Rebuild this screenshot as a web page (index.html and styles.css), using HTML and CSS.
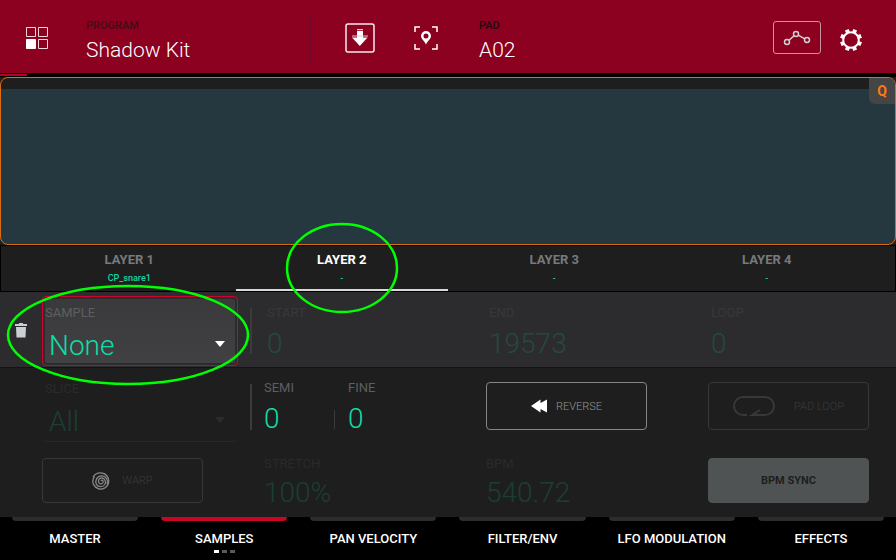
FILE: index.html
```html
<!DOCTYPE html>
<html lang="en">
<head>
<meta charset="utf-8">
<meta name="viewport" content="width=device-width, initial-scale=1">
<title>Program Edit – Samples</title>
<link rel="stylesheet" href="styles.css">
</head>
<body>
<header class="header">
  <button class="icon-button" aria-label="Pad grid">
    <svg width="22" height="22" viewBox="0 0 22 22" fill="none" stroke="#eadadd"><path d="M.5.5h9v9h-9zM12.500.5h9v9h-9zM12.500 12.500h9v9h-9z"/><path fill="#fff" stroke="#fff" d="M.5 12.500h9v9h-9z"/></svg>
  </button>
  <div class="readout program">
    <span class="readout-label">PROGRAM</span>
    <span class="readout-value">Shadow Kit</span>
  </div>
  <button class="icon-button save" aria-label="Save">
    <svg width="30" height="30" viewBox="0 0 30 30"><rect x="1" y="1" width="28" height="28" rx="2" fill="none" stroke="#f6eaed" stroke-width="1.500"/><path fill="#fff" d="M12 8h6v6.500h4.500L14.800 23 7 14.500h5z"/><path fill="#e9c8d0" d="M12 6h6v1.200h-6zM7 12.500h16v1H7z"/></svg>
  </button>
  <button class="icon-button" aria-label="Locate pad">
    <svg width="24" height="24" viewBox="0 0 24 24"><path fill="none" stroke="#fff" stroke-width="1.500" d="M1 6V1h5M18 1h5v5M23 18v5h-5M6 23H1v-5"/><path fill="#fff" fill-rule="evenodd" d="M12 5a5 5 0 0 0-5 5c0 3 3.500 5 5 8.500C13.500 15 17 13 17 10a5 5 0 0 0-5-5zm0 2.500a2.500 2.500 0 1 1 0 5 2.500 2.500 0 0 1 0-5z"/></svg>
  </button>
  <div class="readout pad">
    <span class="readout-label dark">PAD</span>
    <span class="readout-value">A02</span>
  </div>
  <button class="icon-button automation" aria-label="Automation">
    <svg width="28" height="16" viewBox="0 0 28 16" fill="none" stroke="#d5cfd3" stroke-width="1.500"><circle cx="4" cy="12" r="2.500"/><circle cx="13" cy="4" r="2.500"/><circle cx="24" cy="10" r="2.500"/><path d="M6 10.300l5.100-4.600M15.200 5.200l6.600 3.600"/></svg>
  </button>
  <button class="icon-button settings" aria-label="Settings">
    <svg width="22" height="22" viewBox="-11 -11 22 22">
      <circle r="7.800" fill="none" stroke="#fff" stroke-width="2"/>
      <g stroke="#fff" stroke-width="4">
        <path transform="rotate(22.500)" d="M0-11v3M0 11v-3M-11 0h3M11 0h-3"/>
        <path transform="rotate(67.500)" d="M0-11v3M0 11v-3M-11 0h3M11 0h-3"/>
      </g>
    </svg>
  </button>
</header>
<div class="progress"><span class="progress-fill"></span></div>

<main class="main">
  <section class="waveform" aria-label="Waveform">
    <button class="q-link" aria-label="Q-Link">Q</button>
  </section>

  <nav class="layers" aria-label="Layers">
    <button class="layer">LAYER 1<span class="layer-sample">CP_snare1</span></button>
    <button class="layer active">LAYER 2<span class="layer-sample">-</span>
      <svg class="ring" viewBox="0 0 114 92" aria-hidden="true"><ellipse cx="57" cy="46" rx="55" ry="44"/></svg>
    </button>
    <button class="layer">LAYER 3<span class="layer-sample">-</span></button>
    <button class="layer">LAYER 4<span class="layer-sample">-</span></button>
  </nav>

  <section class="row sample-row">
    <button class="trash" aria-label="Clear sample">
      <svg width="12" height="16" viewBox="0 0 12 16" fill="#c9cfd3"><path d="M4 1h4v1h4v2H0V2h4zM1 5h10l-.5 10.500h-9z"/></svg>
    </button>
    <div class="lead">
      <div class="picker focused">
        <div class="picker-face">
          <label class="label" for="sample">SAMPLE</label>
          <select class="value" id="sample"><option>None</option></select>
          <span class="caret"></span>
        </div>
        <svg class="ring" viewBox="0 0 244 102" aria-hidden="true"><ellipse cx="122" cy="51" rx="120" ry="49"/></svg>
      </div>
      <span class="divider"></span>
    </div>
    <div class="field off inset"><label class="label" for="start">START</label><input class="value" id="start" value="0" disabled></div>
    <div class="field off inset"><label class="label" for="end">END</label><input class="value" id="end" value="19573" disabled></div>
    <div class="field off inset"><label class="label" for="loop">LOOP</label><input class="value" id="loop" value="0" disabled></div>
  </section>

  <section class="row slice-row">
    <div class="lead">
      <div class="picker off">
        <div class="picker-face">
          <label class="label" for="slice">SLICE</label>
          <select class="value" id="slice" disabled><option>All</option></select>
          <span class="caret"></span>
        </div>
      </div>
      <span class="divider"></span>
    </div>
    <div class="pair">
      <div class="field"><label class="label" for="semi">SEMI</label><input class="value" id="semi" value="0"></div>
      <div class="field"><label class="label" for="fine">FINE</label><input class="value" id="fine" value="0"></div>
    </div>
    <button class="action reverse">
      <svg width="16" height="14" viewBox="0 0 16 14" fill="#fff"><path d="M0 7 9.500.5V4L16 .5v13L9.500 10v3.500z"/></svg>
      REVERSE
    </button>
    <button class="action loop-button" disabled>
      <svg width="42" height="20" viewBox="0 0 42 20" fill="none" stroke="#38383a" stroke-width="2"><path d="M14 19h-4a9 9 0 0 1 0-18h22a9 9 0 0 1 0 18H19l8-5"/></svg>
      PAD LOOP
    </button>
  </section>

  <section class="row warp-row">
    <button class="action warp" disabled>
      <svg width="18" height="18" viewBox="0 0 18 18" fill="none" stroke="#858787" stroke-width="1.300"><path d="M9 9c.5-1.400 2.400-.6 2.200 1-.3 2-3.200 2.600-4.300.8C5.500 8.500 7.300 5.800 9.800 6c3.200.3 4.600 3.900 3 6.500-2 3-6.500 2.900-8.300-.1C2.500 8.800 5 4 9.200 3.800c4.800-.1 7.500 4.400 6 8.400"/><path d="M1 5C4.500-.2 11.500-.3 15 4c3 4 2 9.800-2.500 12.200-4.200 2-9 .3-11-3.800C.3 9.500.7 6.800 2.500 4.500"/></svg>
      WARP
    </button>
    <div class="field off"><label class="label" for="stretch">STRETCH</label><input class="value" id="stretch" value="100%" disabled></div>
    <div class="field off"><label class="label" for="bpm">BPM</label><input class="value" id="bpm" value="540.72" disabled></div>
    <button class="action sync">BPM SYNC</button>
  </section>
</main>

<nav class="tabs" aria-label="Pages">
  <button class="tab">MASTER</button>
  <button class="tab active">SAMPLES<span class="pages"><i class="current"></i><i></i><i></i></span></button>
  <button class="tab">PAN VELOCITY</button>
  <button class="tab">FILTER/ENV</button>
  <button class="tab">LFO MODULATION</button>
  <button class="tab">EFFECTS</button>
</nav>
</body>
</html>
```
FILE: styles.css
```css
* { box-sizing: border-box; }

body {
  margin: 0;
  min-height: 100vh;
  display: flex;
  flex-direction: column;
  background: #000;
  color: #fff;
  font-family: Roboto, "Liberation Sans", sans-serif;
  font-size: 13px;
}

button, input, select {
  margin: 0;
  padding: 0;
  border: 0;
  border-radius: 0;
  background: none;
  color: inherit;
  font: inherit;
  opacity: 1;
}

svg { display: block; }

/* Header */
.header {
  display: flex;
  align-items: center;
  height: 73px;
  padding: 2px 34px 0 26px;
  background: #8c0020;
}

.icon-button { display: flex; align-items: center; justify-content: center; flex: none; }

.readout { display: flex; flex-direction: column; margin-top: 5px; }
.program {
  width: 225px;
  margin-left: 38px;
  margin-right: 34px;
  border-right: 1px solid #6f0826;
}
.save { margin-right: 39px; }
.pad { margin-left: 41px; margin-right: auto; }
.readout-label { line-height: 20px; font-size: 11px; font-weight: 500; color: #430d14; }
.readout-label.dark { color: #26090c; }
.readout-value { line-height: 28px; font-size: 21px; font-weight: 300; }

.automation {
  width: 48px;
  height: 33px;
  margin-right: 19px;
  border: 1px solid #c795a2;
  border-radius: 3px;
}
.settings { margin-top: 4px; }

.progress { height: 4px; padding-top: 1px; }
.progress-fill { display: block; width: 3%; height: 2px; background: #b50325; }

/* Main area */
.main {
  flex: 1;
  display: flex;
  flex-direction: column;
  background: #1e1e1e;
}

.waveform {
  flex: 1;
  display: flex;
  justify-content: flex-end;
  align-items: flex-start;
  min-height: 120px;
  border: 1px solid #d96c15;
  border-radius: 8px;
  overflow: hidden;
  background: linear-gradient(#1e1e1e 11px, #25373f 11px);
}
.q-link {
  width: 26px;
  height: 26px;
  border-radius: 0 0 0 6px;
  background: #454545;
  color: #ff7a10;
  font-size: 14px;
  font-weight: 700;
}

/* Layer tabs */
.layers {
  display: grid;
  grid-template-columns: repeat(4, 1fr);
  height: 47px;
  padding: 0 22px;
  border: 1px solid #000;
}
.layer {
  position: relative;
  display: flex;
  flex-direction: column;
  align-items: center;
  padding-top: 4px;
  border-bottom: 2px solid transparent;
  line-height: 20px;
  font-weight: 700;
  color: #777a7c;
}
.layer.active { color: #fff; border-color: #d8d8d8; }
.layer-sample { line-height: 16px; font-size: 9px; font-weight: 500; color: #12d6a0; }

/* Highlight rings drawn over the controls */
.ring {
  position: absolute;
  z-index: 1;
  top: 50%;
  left: 50%;
  transform: translate(-50%, -50%);
  pointer-events: none;
  fill: none;
  stroke: #0f0;
  stroke-width: 2.500;
}
.layer .ring { width: 114px; }
.picker .ring { width: 244px; top: 56%; left: 44%; }

/* Parameter rows */
.row {
  position: relative;
  display: grid;
  grid-template-columns: 222fr 222fr 222fr 161fr;
  padding: 0 27px 0 42px;
}
.sample-row {
  padding-top: 4px;
  height: 76px;
  background: #2c2c2e;
  border-bottom: 1px solid #141414;
}
.slice-row { height: 90px; padding-top: 4px; }
.warp-row { height: 59px; }

.trash { position: absolute; top: 30px; left: 15px; }

.lead { display: flex; align-items: flex-start; }
.picker {
  position: relative;
  flex: 1;
  height: 70px;
  padding: 2px;
  border: 1px solid transparent;
  border-radius: 4px;
}
.picker.focused { border-color: #c9052f; }
.focused .picker-face { background: linear-gradient(#3a3a3c, #414143); }
.picker.off { border-bottom-color: #272727; }
.picker-face { display: flex; flex-direction: column; height: 64px; border-radius: 2px; }
.divider { width: 2px; height: 46px; margin: 12px 12px 0; background: #3b3b3d; }

.label { line-height: 16px; color: #5c5f60; }
.value {
  width: 100%;
  line-height: 36px;
  height: 36px;
  font-size: 28px;
  font-weight: 300;
  color: #0fdda6;
}
select.value { appearance: none; padding-left: 4px; opacity: 1; }
.picker .label { padding-top: 6px; }
.picker .value { margin-top: 7px; }
.caret {
  position: absolute;
  right: 12px;
  bottom: 18px;
  border: 5px solid transparent;
  border-top: 6px solid #fff;
  border-bottom: 0;
}
.off .label { color: #2a2a2a; }
.off .value { color: #1b3e34; }
.off .caret { border-top-color: #2c2c2c; }

.field { display: flex; flex-direction: column; }
.inset { padding: 9px 0 0 3px; }
.sample-row .off .label { color: #38383a; }
.sample-row .off .value { color: #26493f; }
.sample-row .field .value { margin-top: 5px; }

.pair { display: grid; grid-template-columns: 84px 84px; padding-top: 8px; }
.pair .value { margin-top: 5px; width: 71px; }
.pair .field:first-child .value {
  background: linear-gradient(#3a3a3a, #3a3a3a) right 9px / 1px 19px no-repeat;
}
.warp-row .label { line-height: 12px; }
.warp-row .field .value { margin-top: 5px; }

.action {
  display: flex;
  align-items: center;
  justify-content: center;
  width: 161px;
  height: 45px;
  border: 1px solid #37383a;
  border-radius: 4px;
  font-size: 11px;
  font-weight: 300;
  color: #3b3c3d;
}
.slice-row .action { height: 48px; margin-top: 10px; }
.reverse { gap: 9px; border-color: #858787; color: #949697; }
.loop-button { gap: 19px; }
.warp { gap: 12px; }
.sync { border-color: #505354; background: #505354; color: #1e1e1e; font-weight: 700; }

/* Page tabs */
.tabs {
  display: grid;
  grid-template-columns: repeat(6, 1fr);
  gap: 23px;
  height: 43px;
  padding: 0 12px;
}
.tab {
  position: relative;
  display: flex;
  justify-content: center;
  align-items: flex-start;
  padding-top: 12px;
  line-height: 20px;
  font-weight: 500;
  white-space: nowrap;
}
.tab::before {
  content: "";
  position: absolute;
  top: 0;
  left: 0;
  right: 0;
  height: 4px;
  border-radius: 0 0 4px 4px;
  background: #2d2d2f;
}
.tab.active::before { background: #cc0526; }
.pages { position: absolute; top: 33px; display: flex; gap: 3px; }
.pages i { width: 5px; height: 3px; background: #5a5a5a; }
.pages .current { background: #fff; }
```
